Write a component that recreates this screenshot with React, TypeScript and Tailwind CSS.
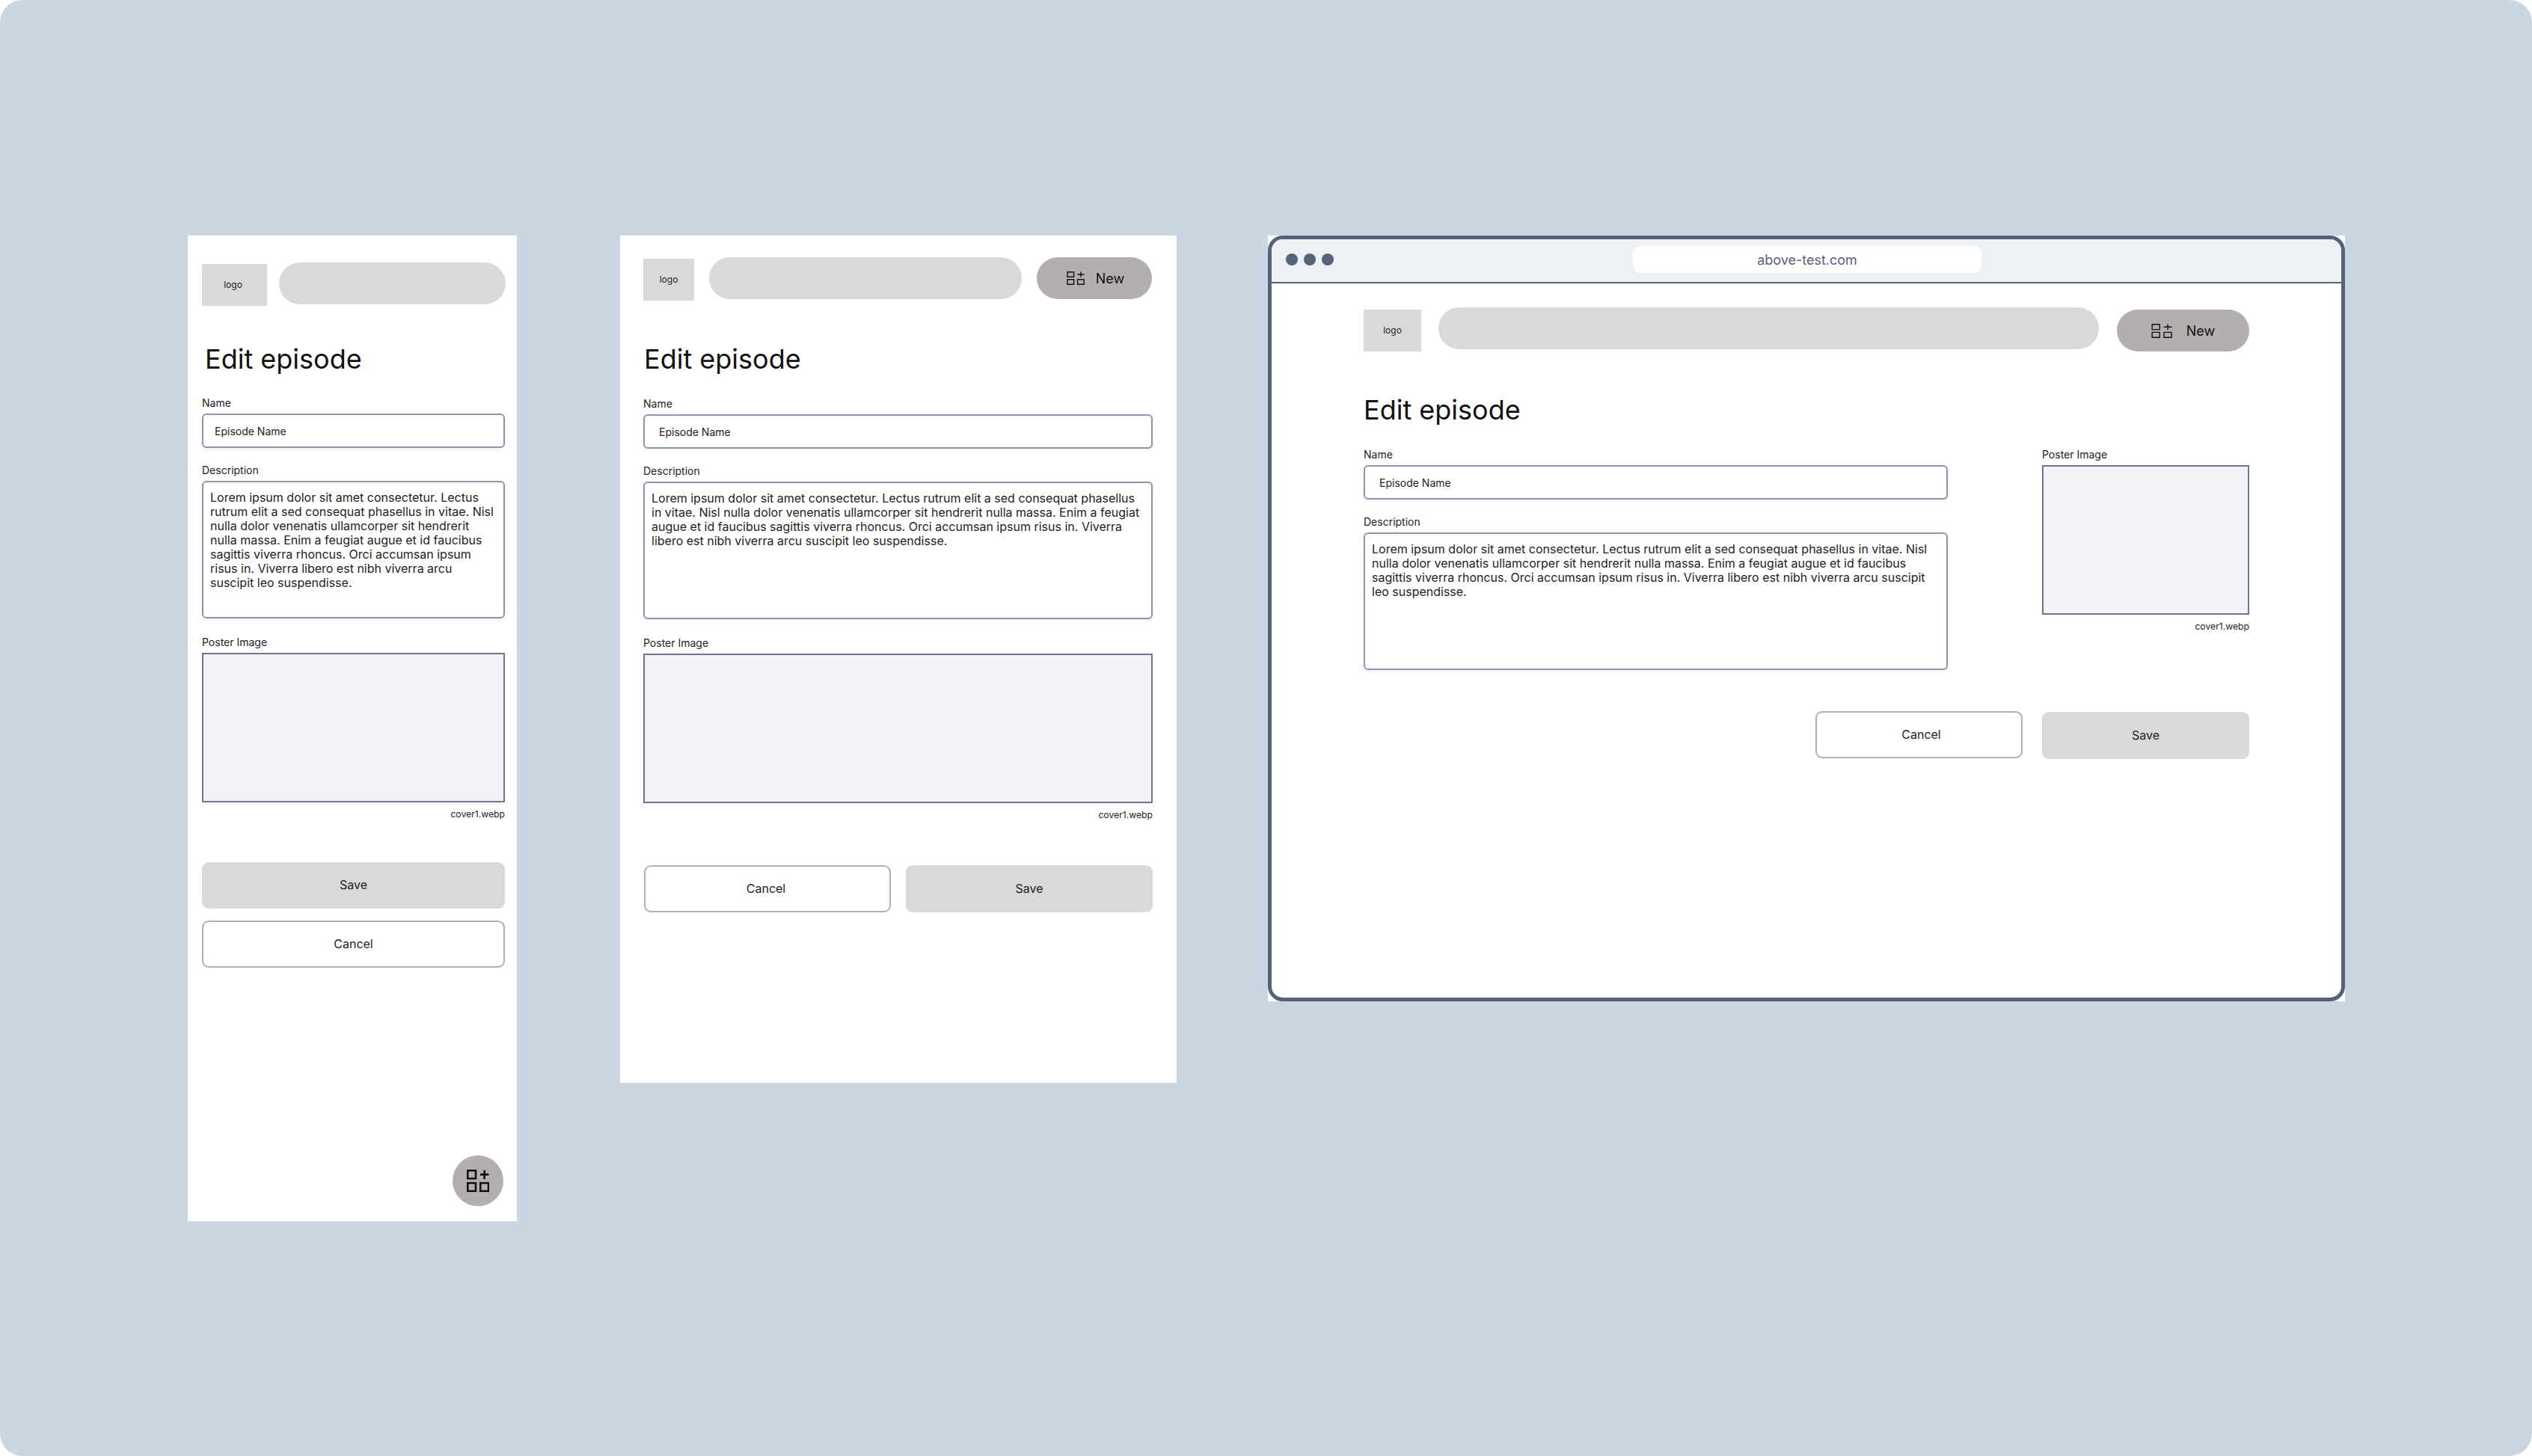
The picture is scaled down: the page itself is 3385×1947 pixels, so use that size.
const lorem =
  'Lorem ipsum dolor sit amet consectetur. Lectus rutrum elit a sed consequat phasellus in vitae. Nisl nulla dolor venenatis ullamcorper sit hendrerit nulla massa. Enim a feugiat augue et id faucibus sagittis viverra rhoncus. Orci accumsan ipsum risus in. Viverra libero est nibh viverra arcu suscipit leo suspendisse.';

function AddIcon({ className, weight }: { className: string; weight: number }) {
  return (
    <svg className={className} viewBox="0 0 24 24" fill="none" stroke="currentColor" strokeWidth={weight} preserveAspectRatio="none">
      <rect x="1" y="1" width="8.6" height="8.6" vectorEffect="non-scaling-stroke" />
      <rect x="1" y="14.4" width="8.6" height="8.6" vectorEffect="non-scaling-stroke" />
      <rect x="14.6" y="14.4" width="8.6" height="8.6" vectorEffect="non-scaling-stroke" />
      <path d="M18.9 0.6v9.6M14.4 5.3h9.2" vectorEffect="non-scaling-stroke" />
    </svg>
  );
}

function Field({ label, children, className = '' }: { label: string; children: React.ReactNode; className?: string }) {
  return (
    <div className={className}>
      <div className="h-[18px] text-[14px] leading-[18px] text-[#222]">{label}</div>
      {children}
    </div>
  );
}

function NameField({ inset }: { inset: string }) {
  return (
    <Field label="Name" className="w-full">
      <div className={`mt-[5px] flex h-[46px] items-center rounded-[6px] border-2 border-[#8e94ad] bg-white text-[14px] text-[#222] shadow-[0_2px_5px_rgba(40,50,90,0.08)] ${inset}`}>
        Episode Name
      </div>
    </Field>
  );
}

function DescriptionField() {
  return (
    <Field label="Description" className="mt-[21px] w-full">
      <div className="mt-[5px] h-[184px] rounded-[6px] border-2 border-[#8e94ad] bg-white px-[9px] pt-[11px] text-[16px] leading-[19px] text-[#222] shadow-[0_2px_5px_rgba(40,50,90,0.08)]">
        {lorem}
      </div>
    </Field>
  );
}

function Poster({ className = '' }: { className?: string }) {
  return (
    <Field label="Poster Image" className={className}>
      <div className="mt-[5px] h-[200px] border-2 border-[#6d7390] bg-[#f1f3f7]" />
      <div className="mt-[7px] text-right text-[12.2px] leading-[17px] text-[#222]">cover1.webp</div>
    </Field>
  );
}

function Logo({ className }: { className: string }) {
  return (
    <div className={`flex h-[56px] shrink-0 items-center justify-center bg-[#d9d9d9] text-[12px] text-[#222] ${className}`}>logo</div>
  );
}

function SaveButton({ className }: { className: string }) {
  return (
    <div className={`flex items-center justify-center rounded-[9px] bg-[#d9d9d9] pb-[2px] text-[16px] text-[#222] ${className}`}>Save</div>
  );
}

function CancelButton({ className }: { className: string }) {
  return (
    <div className={`flex h-[63px] items-center justify-center rounded-[9px] border-2 border-[#b5aeae] bg-white pb-[2px] text-[16px] text-[#222] ${className}`}>Cancel</div>
  );
}

function Title({ className }: { className: string }) {
  return <h1 className={`text-[36px] leading-[44px] font-normal text-[#111] ${className}`}>Edit episode</h1>;
}

function PhoneFrame() {
  return (
    <div className="relative h-[1318px] w-[440px] shrink-0 bg-white px-[19px] pt-[36px]">
      <div className="flex w-[406px] items-start gap-[16px]">
        <Logo className="mt-[2px] w-[87px] pr-[4px]" />
        <div className="h-[56px] w-[303px] rounded-full bg-[#d9d9d9]" />
      </div>
      <Title className="mt-[49px] ml-[4px]" />
      <div className="mt-[28px] w-[405px]">
        <NameField inset="pl-[15px]" />
        <DescriptionField />
        <Poster className="mt-[23px]" />
        <SaveButton className="mt-[56px] h-[62px] w-full" />
        <CancelButton className="mt-[16px] w-full" />
      </div>
      <div className="absolute right-[18px] bottom-[20px] flex h-[68px] w-[68px] items-center justify-center rounded-full bg-[#b5aeae] text-[#111]">
        <AddIcon className="h-[30px] w-[30px]" weight={2.6} />
      </div>
    </div>
  );
}

function TabletFrame() {
  return (
    <div className="h-[1133px] w-[744px] shrink-0 bg-white pt-[29px] pl-[31px]">
      <div className="flex w-[680px] items-start gap-[20px]">
        <Logo className="mt-[2px] w-[68px]" />
        <div className="h-[56px] w-[418px] rounded-full bg-[#d9d9d9]" />
        <div className="flex h-[56px] w-[154px] items-center justify-center gap-[15px] rounded-full bg-[#b5aeae] pl-[3px] text-[18px] text-[#111]">
          <AddIcon className="h-[18px] w-[24px]" weight={1.4} />
          New
        </div>
      </div>
      <Title className="mt-[56px] ml-[1px]" />
      <div className="mt-[29px] w-[681px]">
        <NameField inset="pl-[19px]" />
        <DescriptionField />
        <Poster className="mt-[23px]" />
        <div className="mt-[59px] flex justify-between pl-[1px]">
          <CancelButton className="w-[330px] pr-[4px]" />
          <SaveButton className="h-[63px] w-[330px]" />
        </div>
      </div>
    </div>
  );
}

function DesktopFrame() {
  return (
    <div className="h-[1024px] w-[1440px] shrink-0 bg-white">
      <div className="h-full overflow-hidden rounded-[20px] border-[5px] border-[#566278] bg-white">
        <div className="flex h-[59px] items-center border-b-2 border-[#566278] bg-[#edf1f5] pb-[3px] pl-[19px]">
          <div className="flex gap-[8px]">
            <div className="h-[16px] w-[16px] rounded-full bg-[#566278]" />
            <div className="h-[16px] w-[16px] rounded-full bg-[#566278]" />
            <div className="h-[16px] w-[16px] rounded-full bg-[#566278]" />
          </div>
          <div className="ml-[400px] flex h-[36px] w-[466px] items-center justify-center rounded-[10px] bg-white text-[18px] text-[#566278]">
            above-test.com
          </div>
        </div>
        <div className="w-[1307px] pt-[32px] pl-[123px]">
          <div className="flex items-start">
            <Logo className="mt-[3px] w-[77px]" />
            <div className="ml-[23px] h-[56px] w-[883px] rounded-full bg-[#d9d9d9]" />
            <div className="mt-[3px] ml-[24px] flex h-[56px] w-[177px] shrink-0 items-center justify-center gap-[19px] rounded-full bg-[#b5aeae] text-[18px] text-[#111]">
              <AddIcon className="h-[19px] w-[28px]" weight={1.4} />
              New
            </div>
          </div>
          <Title className="mt-[56px]" />
          <div className="mt-[29px] flex items-start justify-between">
            <div className="w-[781px]">
              <NameField inset="pl-[19px]" />
              <DescriptionField />
            </div>
            <Poster className="w-[277px]" />
          </div>
          <div className="mt-[55px] flex items-start justify-end gap-[26px]">
            <CancelButton className="w-[277px] pl-[6px]" />
            <SaveButton className="mt-[1px] h-[63px] w-[277px]" />
          </div>
        </div>
      </div>
    </div>
  );
}

export default function App() {
  return (
    <div className="flex h-[1947px] w-[3385px] items-start overflow-hidden rounded-[30px] bg-[#cad6e2] pt-[315px] pl-[251px] font-['Inter',sans-serif] antialiased">
      <PhoneFrame />
      <div className="ml-[138px]">
        <TabletFrame />
      </div>
      <div className="ml-[122px]">
        <DesktopFrame />
      </div>
    </div>
  );
}
